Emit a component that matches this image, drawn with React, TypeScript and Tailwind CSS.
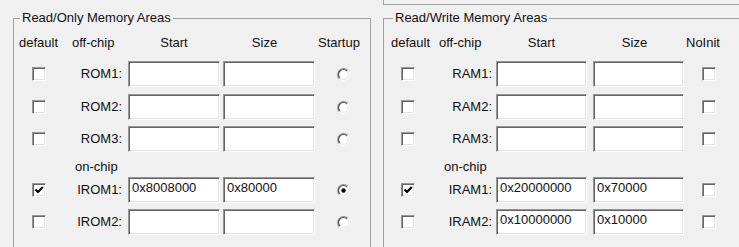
import React from 'react';

const sunken =
  'bg-white border border-t-[#969696] border-l-[#969696] border-b-white border-r-white shadow-[inset_1px_1px_0_#646464,inset_-1px_-1px_0_#e3e3e3]';

function CheckBox({ checked = false }: { checked?: boolean }) {
  return (
    <div className={`w-[14px] h-[14px] flex items-center justify-center ${sunken}`}>
      {checked && (
        <svg width="10" height="10" viewBox="0 0 10 10">
          <path d="M1.5 4.5 L4 7 L8.8 2" stroke="#000" strokeWidth="2.2" fill="none" />
        </svg>
      )}
    </div>
  );
}

function Radio({ checked = false }: { checked?: boolean }) {
  return (
    <svg width="13" height="13" viewBox="0 0 13 13">
      <circle cx="6.5" cy="6.5" r="6" fill="#fff" />
      <path d="M2.26 10.74 A6 6 0 0 1 10.74 2.26" stroke="#969696" strokeWidth="1.2" fill="none" />
      <path d="M2.96 10.04 A5 5 0 0 1 10.04 2.96" stroke="#555" strokeWidth="1.2" fill="none" />
      <path d="M10.74 2.26 A6 6 0 0 1 2.26 10.74" stroke="#ffffff" strokeWidth="1" fill="none" />
      <path d="M10.04 2.96 A5 5 0 0 1 2.96 10.04" stroke="#e3e3e3" strokeWidth="1" fill="none" />
      {checked && <circle cx="6.5" cy="6.5" r="2.2" fill="#000" />}
    </svg>
  );
}

function Field({ value = '', w }: { value?: string; w: string }) {
  return (
    <div className={`h-[26px] ${w} pl-[3px] pt-[2px] leading-[16px] ${sunken}`}>{value}</div>
  );
}

type Area = { label: string; def?: boolean; start?: string; size?: string; flag?: boolean };

function RomRow({ a, className = '' }: { a: Area; className?: string }) {
  return (
    <div className={`flex items-center h-[26px] ${className}`}>
      <div className="w-[58px] pl-[18px]">
        <CheckBox checked={a.def} />
      </div>
      <div className="w-[52px] text-right pr-[2px]">{a.label}</div>
      <div className="ml-[4px]">
        <Field value={a.start} w="w-[92px]" />
      </div>
      <div className="ml-[3px]">
        <Field value={a.size} w="w-[92px]" />
      </div>
      <div className="pl-[22px] flex">
        <Radio checked={a.flag} />
      </div>
    </div>
  );
}

function RamRow({ a, className = '' }: { a: Area; className?: string }) {
  return (
    <div className={`flex items-center h-[26px] ${className}`}>
      <div className="w-[58px] pl-[17px]">
        <CheckBox checked={a.def} />
      </div>
      <div className="w-[52px] text-right pr-[2px]">{a.label}</div>
      <div className="ml-[2px]">
        <Field value={a.start} w="w-[91px]" />
      </div>
      <div className="ml-[6px]">
        <Field value={a.size} w="w-[91px]" />
      </div>
      <div className="ml-[18px]">
        <CheckBox checked={a.flag} />
      </div>
    </div>
  );
}

const rom: Area[] = [
  { label: 'ROM1:' },
  { label: 'ROM2:' },
  { label: 'ROM3:' },
  { label: 'IROM1:', def: true, start: '0x8008000', size: '0x80000', flag: true },
  { label: 'IROM2:' },
];

const ram: Area[] = [
  { label: 'RAM1:' },
  { label: 'RAM2:' },
  { label: 'RAM3:' },
  { label: 'IRAM1:', def: true, start: '0x20000000', size: '0x70000' },
  { label: 'IRAM2:', start: '0x10000000', size: '0x10000' },
];

const rowGaps = ['mt-[10px]', 'mt-[7px]', 'mt-[6px]', 'mt-[2px]', 'mt-[6px]'];

export default function App() {
  return (
    <div
      className="w-[739px] h-[247px] overflow-hidden bg-[#f0f0f0] text-[13px] text-[#111] flex"
      style={{ fontFamily: '"Liberation Sans", Arial, sans-serif' }}
    >
      {/* Read/Only */}
      <div className="pl-[13px] pt-[10px]">
        <fieldset className="w-[358px] h-[260px] border border-[#a0a0a0]">
          <legend className="ml-[6px] px-[2px] leading-[16px]">Read/Only Memory Areas</legend>
          <div className="flex h-[16px] leading-[16px] mt-[9px]">
            <span className="w-[58px] pl-[5px]">default</span>
            <span className="w-[56px]">off-chip</span>
            <span className="w-[92px] text-center">Start</span>
            <span className="w-[95px] text-center pl-[3px] pr-[9px]">Size</span>
            <span className="pl-[3px]">Startup</span>
          </div>
          {rom.slice(0, 3).map((a, i) => (
            <RomRow key={a.label} a={a} className={rowGaps[i]} />
          ))}
          <div className="h-[16px] leading-[16px] mt-[7px] pl-[61px]">on-chip</div>
          {rom.slice(3).map((a, i) => (
            <RomRow key={a.label} a={a} className={rowGaps[i + 3]} />
          ))}
        </fieldset>
      </div>

      {/* Read/Write */}
      <div className="ml-[12px]">
        <div className="h-[5px] w-[380px] border-l border-b border-[#a0a0a0]" />
        <fieldset className="mt-[5px] w-[380px] h-[260px] border border-[#a0a0a0]">
          <legend className="ml-[9px] px-[2px] leading-[16px]">Read/Write Memory Areas</legend>
          <div className="flex h-[16px] leading-[16px] mt-[9px]">
            <span className="w-[55px] pl-[7px]">default</span>
            <span className="w-[57px]">off-chip</span>
            <span className="w-[91px] text-center">Start</span>
            <span className="w-[97px] text-center pl-[6px] pr-[8px]">Size</span>
            <span className="pl-[2px]">NoInit</span>
          </div>
          {ram.slice(0, 3).map((a, i) => (
            <RamRow key={a.label} a={a} className={rowGaps[i]} />
          ))}
          <div className="h-[16px] leading-[16px] mt-[7px] pl-[60px]">on-chip</div>
          {ram.slice(3).map((a, i) => (
            <RamRow key={a.label} a={a} className={rowGaps[i + 3]} />
          ))}
        </fieldset>
      </div>
    </div>
  );
}
